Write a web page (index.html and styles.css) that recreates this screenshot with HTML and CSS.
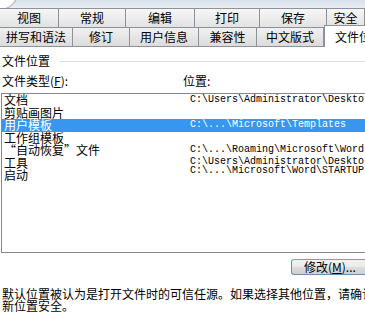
FILE: index.html
```html
<!DOCTYPE html>
<html lang="zh">
<head>
<meta charset="utf-8">
<link rel="stylesheet" href="styles.css">
</head>
<body>
<div class="page">
  <div class="strip"></div>
  <div class="tabrow r1">
    <div class="tab">视图</div>
    <div class="tab">常规</div>
    <div class="tab">编辑</div>
    <div class="tab">打印</div>
    <div class="tab">保存</div>
    <div class="tab">安全</div>
  </div>
  <div class="tabrow r2">
    <div class="tab">拼写和语法</div>
    <div class="tab">修订</div>
    <div class="tab">用户信息</div>
    <div class="tab">兼容性</div>
    <div class="tab">中文版式</div>
    <div class="tab active">文件位置</div>
  </div>
  <div class="content">
    <div class="group-title"><span>文件位置</span><span class="rule"></span></div>
    <div class="cols">
      <span>文件类型(<u>F</u>):</span>
      <span>位置:</span>
    </div>
    <div class="listbox">
      <div class="labels">
        <div class="item">文档</div>
        <div class="item">剪贴画图片</div>
        <div class="item sel">用户模板</div>
        <div class="item">工作组模板</div>
        <div class="item">“自动恢复”文件</div>
        <div class="item">工具</div>
        <div class="item">启动</div>
      </div>
      <div class="paths">
        <div class="path">C:\Users\Administrator\Deskto</div>
        <div class="path"></div>
        <div class="path sel">C:\...\Microsoft\Templates</div>
        <div class="path"></div>
        <div class="path">C:\...\Roaming\Microsoft\Word</div>
        <div class="path tight">C:\Users\Administrator\Deskto</div>
        <div class="path tight">C:\...\Microsoft\Word\STARTUP</div>
      </div>
    </div>
    <div class="btnrow">
      <button class="btn">修改(<u>M</u>)...</button>
    </div>
    <p class="note">默认位置被认为是打开文件时的可信任源。如果选择其他位置，请确认<br>新位置安全。</p>
  </div>
</div>
</body>
</html>
```

FILE: styles.css
```css
html, body {
  margin: 0;
  padding: 0;
  background: #ffffff;
}
body {
  width: 365px;
  height: 325px;
  overflow: hidden;
  font-family: "Noto Sans CJK SC", "DejaVu Sans", sans-serif;
  font-size: 12px;
  color: #000;
}
.page {
  position: relative;
  width: 365px;
  height: 325px;
  overflow: hidden;
}
.strip {
  position: relative;
  height: 8px;
  background: linear-gradient(#d6e0ea, #e9eef4);
  overflow: hidden;
}
.strip::before {
  content: "";
  position: absolute;
  left: -18px;
  top: -26px;
  width: 34px;
  height: 34px;
  border-radius: 50%;
  background: #ffffff;
  border: 1px solid #9aa3ad;
}
.tabrow {
  display: grid;
  height: 19px;
  border-top: 1px solid #8e9198;
  box-sizing: border-box;
}
.r1 {
  grid-template-columns: 59px 67px 69px 65px 67px 1fr;
  height: 19px;
}
.r2 {
  grid-template-columns: 73px 57px 69px 58px 67px 1fr;
  height: 20px;
  border-bottom: 1px solid #8e9198;
}
.tab {
  display: flex;
  align-items: center;
  justify-content: center;
  border-right: 1px solid #8e9198;
  background: linear-gradient(#f7f7f7, #e2e2e2);
  line-height: 14px;
  white-space: nowrap;
  overflow: hidden;
}
.r2 .tab {
  background: linear-gradient(#f0f0f0, #dcdcdc);
}
.tab.active {
  justify-content: flex-start;
  padding-left: 10px;
  margin-top: -3px;
  margin-bottom: -1px;
  background: #ffffff;
  border-top: 1px solid #8e9198;
  border-left: 1px solid #8e9198;
  border-right: none;
  position: relative;
}
.content {
  padding-left: 2px;
}
.group-title {
  display: flex;
  align-items: center;
  margin-top: 6px;
  height: 16px;
  line-height: 16px;
}
.rule {
  flex: 1;
  height: 0;
  border-top: 1px solid #d8dde2;
  margin-left: 10px;
}
.cols {
  display: grid;
  grid-template-columns: 181px 1fr;
  margin-top: 4px;
  height: 16px;
  line-height: 16px;
}
.cols u {
  text-decoration: underline;
}
.listbox {
  display: grid;
  grid-template-columns: 186px 1fr;
  margin-top: 4px;
  margin-left: -1px;
  height: 160px;
  box-sizing: border-box;
  border: 1px solid #828790;
  border-right: none;
  padding-top: 0;
}
.labels, .paths {
  padding-top: 0;
}
.item {
  height: 12.5px;
  line-height: 12.5px;
  padding-left: 2px;
  white-space: nowrap;
}
.item.sel, .path.sel {
  background: #3797f0;
  color: #ffffff;
}
.path {
  height: 12.5px;
  line-height: 12.5px;
  font-family: "Liberation Mono", "DejaVu Sans Mono", monospace;
  font-size: 10px;
  white-space: nowrap;
  padding-left: 2px;
}
.path.tight {
  height: 9px;
  line-height: 9px;
}
.btnrow {
  display: flex;
  margin-top: 6px;
  padding-left: 289px;
}
.btn {
  flex: none;
  width: 80px;
  height: 16px;
  padding: 0 0 0 12px;
  text-align: left;
  font-family: "Noto Sans CJK SC", "DejaVu Sans", sans-serif;
  font-size: 12px;
  line-height: 14px;
  color: #000;
  border: 1px solid #6f8fa8;
  border-top-color: #3fb6d8;
  border-radius: 3px;
  background: linear-gradient(#f2f2f2 0%, #ebebeb 45%, #dcdcdc 55%, #cfcfcf 100%);
}
.note {
  margin: 13px 0 0 0;
  line-height: 12px;
  white-space: nowrap;
}
```
